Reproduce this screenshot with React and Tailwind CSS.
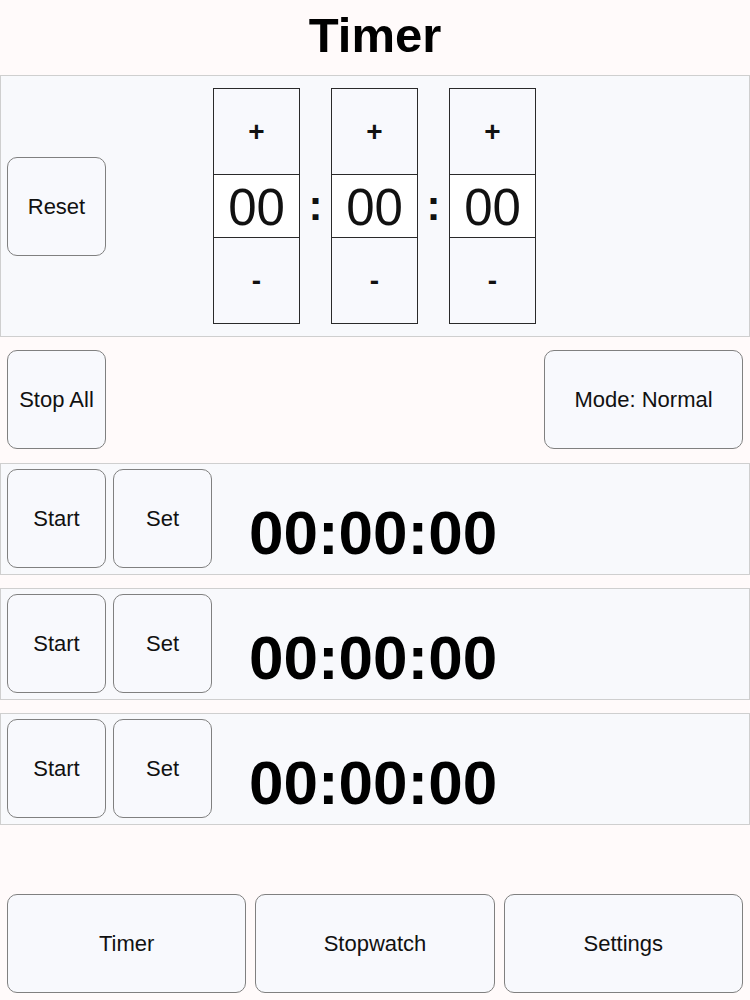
import React from "react";

const font = { fontFamily: '"Liberation Sans", Arial, sans-serif' };

const Btn = ({ className = "", children }) => (
  <button
    className={`flex items-center justify-center rounded-[10px] border border-[#808080] bg-[#f8f9fd] text-[22px] text-[#111] ${className}`}
  >
    {children}
  </button>
);

const DigitColumn = () => (
  <div className="flex w-[87px] flex-col border border-[#2a2a2a]">
    <div className="flex h-[86px] items-center justify-center border-b border-[#2a2a2a] bg-[#f8f9fd] text-[28px] font-bold text-[#111]">
      +
    </div>
    <div className="flex h-[63px] items-center justify-center border-b border-[#2a2a2a] bg-white pt-[3px] text-[51px] leading-none text-[#111]">
      00
    </div>
    <div className="flex h-[85px] items-center justify-center bg-[#f8f9fd] text-[28px] font-bold text-[#111]">
      -
    </div>
  </div>
);

const Colon = () => (
  <div className="flex w-[31px] items-center justify-center text-[42px] font-bold leading-none text-[#111]">
    :
  </div>
);

const TimerRow = () => (
  <div className="flex h-[112px] border border-[#cfcfcf] bg-[#f8f9fc] pl-[6px] pt-[5px]">
    <Btn className="h-[99px] w-[99px]">Start</Btn>
    <Btn className="ml-[7px] h-[99px] w-[99px]">Set</Btn>
    <div className="ml-[37px] mt-[33px] text-[62px] font-bold leading-none text-black">
      00:00:00
    </div>
  </div>
);

export default function App() {
  return (
    <div className="min-h-[1000px] w-[750px] bg-[#fffafa]" style={font}>
      <header className="flex h-[75px] items-center justify-center pb-[5px]">
        <h1 className="text-[49px] font-bold leading-none text-black">Timer</h1>
      </header>

      <section className="flex h-[262px] items-center border border-[#cfcfcf] bg-[#f8f9fc]">
        <Btn className="ml-[6px] h-[99px] w-[99px]">Reset</Btn>
        <div className="ml-[107px] flex">
          <DigitColumn />
          <Colon />
          <DigitColumn />
          <Colon />
          <DigitColumn />
        </div>
      </section>

      <div className="mt-[13px] flex justify-between px-[7px]">
        <Btn className="h-[99px] w-[99px]">Stop All</Btn>
        <Btn className="h-[99px] w-[199px]">Mode: Normal</Btn>
      </div>

      <div className="mt-[14px] flex flex-col gap-[13px]">
        <TimerRow />
        <TimerRow />
        <TimerRow />
      </div>

      <nav className="mt-[69px] grid grid-cols-3 gap-[9px] px-[7px]">
        <Btn className="h-[99px]">Timer</Btn>
        <Btn className="h-[99px]">Stopwatch</Btn>
        <Btn className="h-[99px]">Settings</Btn>
      </nav>
    </div>
  );
}
